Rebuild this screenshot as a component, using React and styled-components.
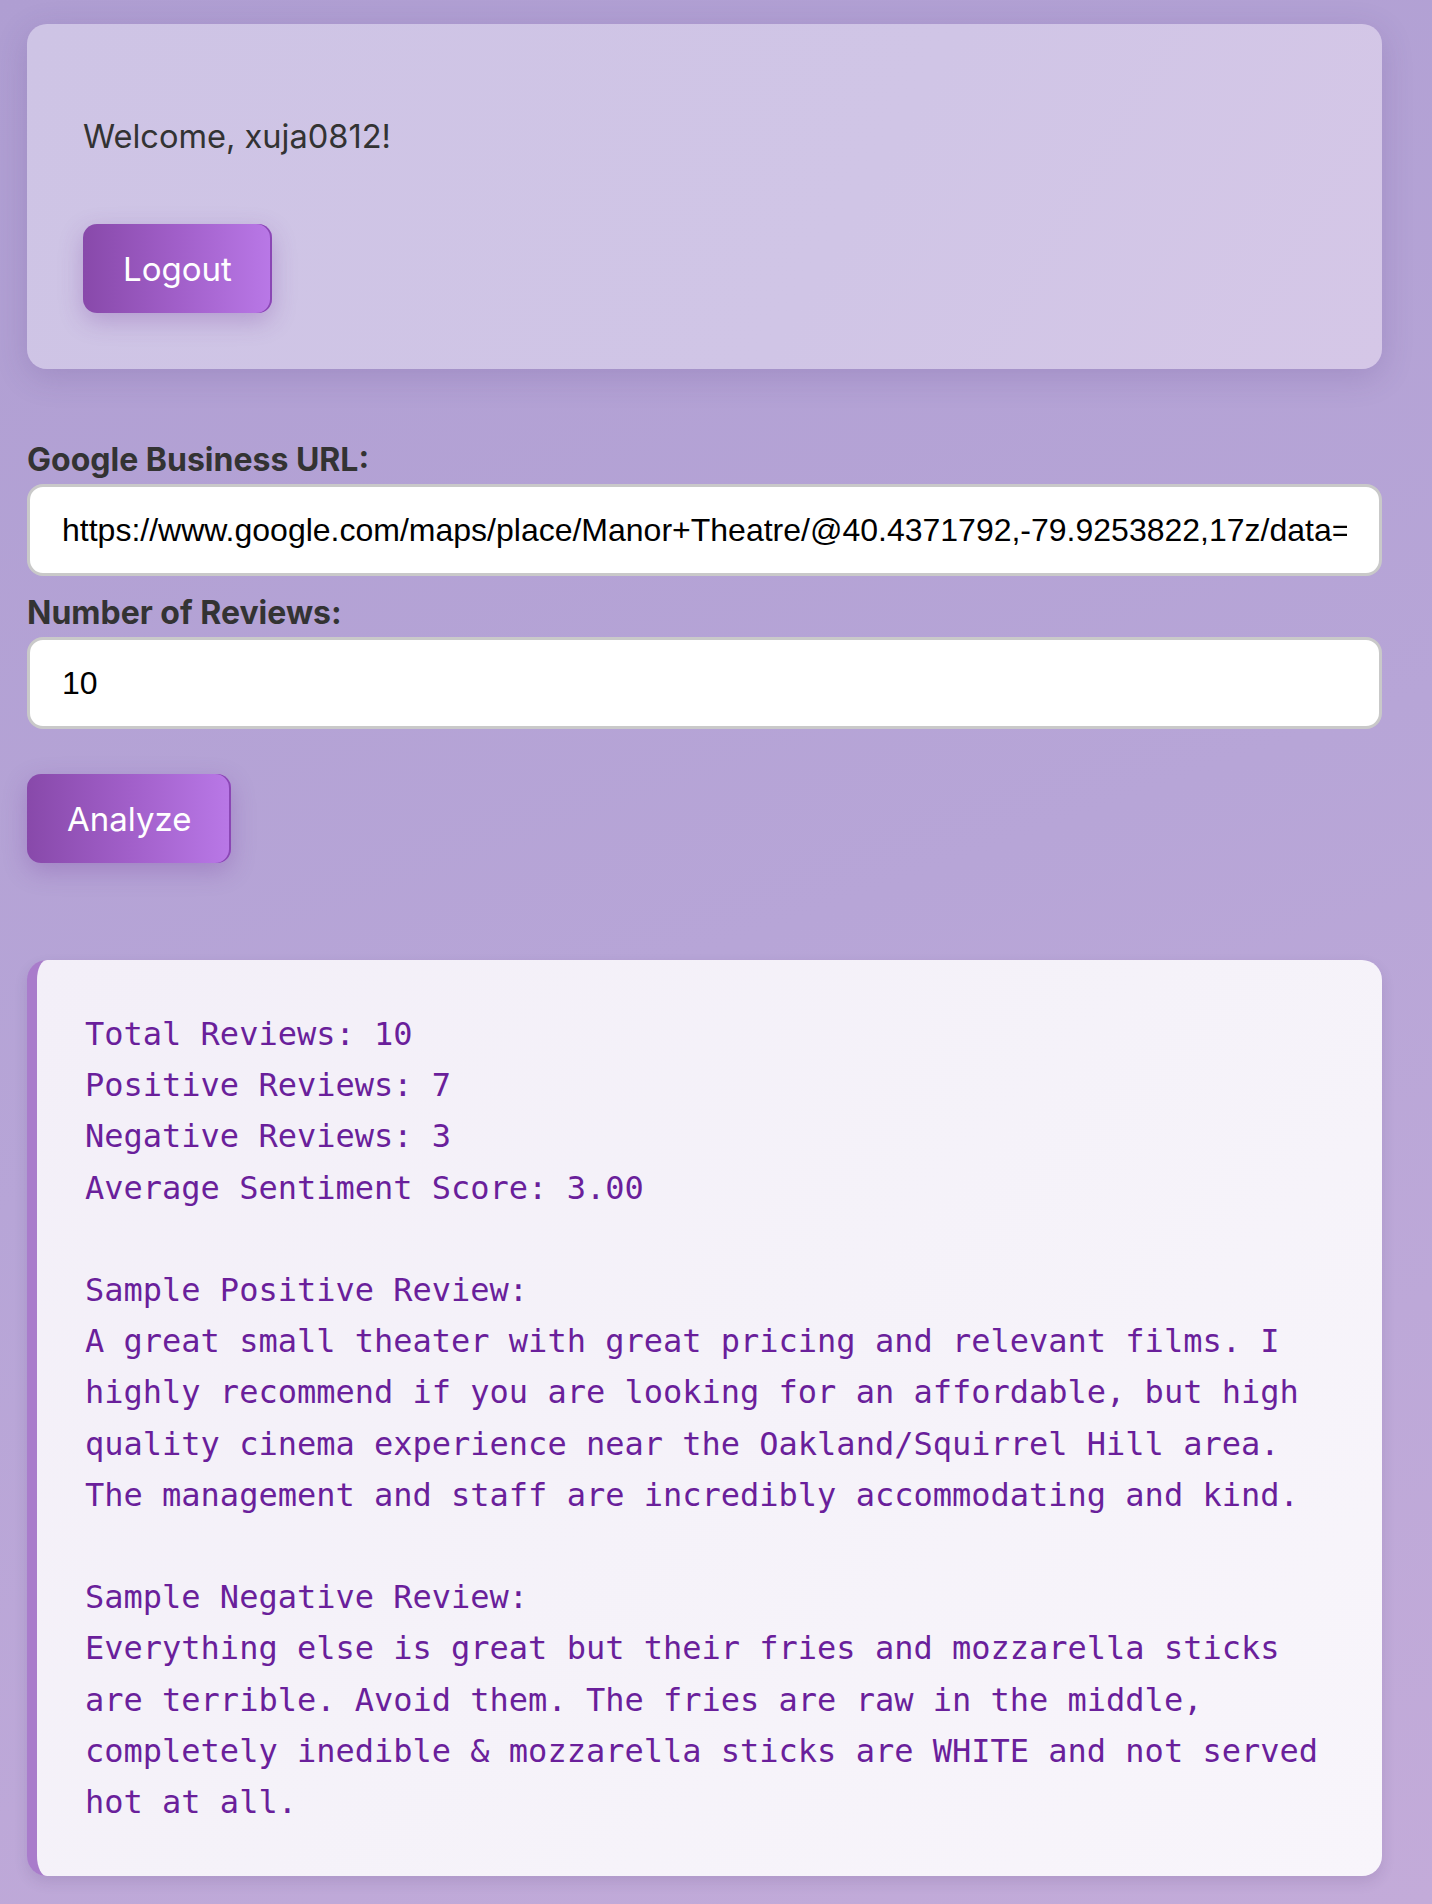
import React from "react";
import styled, { createGlobalStyle } from "styled-components";

const GlobalStyle = createGlobalStyle`
  html, body {
    margin: 0;
    padding: 0;
  }
  body {
    min-height: 100vh;
    background: linear-gradient(160deg, #af9ed2 0%, #b7a5d7 50%, #c3abd9 100%);
    font-family: "Inter", "Noto Sans", sans-serif;
    color: #333;
  }
  * { box-sizing: border-box; }
`;

const Page = styled.div`
  padding: 24px 50px 27px 27px;
  display: flex;
  flex-direction: column;
`;

const UserCard = styled.section`
  background: linear-gradient(120deg, #cec4e5 0%, #d0c5e6 60%, #d5c7e7 100%);
  border-radius: 20px;
  padding: 0 56px 56px;
  height: 345px;
  box-shadow: 0 8px 32px rgba(80, 50, 120, 0.18);
  display: flex;
  flex-direction: column;
  align-items: flex-start;
`;

const Welcome = styled.p`
  margin: 91px 0 0;
  font-size: 32.6px;
  line-height: 42px;
  font-weight: 400;
  color: #333;
`;

const GradientButton = styled.button`
  height: 89px;
  padding: 0 40px;
  margin-top: ${(p) => p.$mt || 0}px;
  border: none;
  border-radius: 14px;
  background: linear-gradient(90deg, #8849aa 0%, #a15fc9 50%, #b978e7 100%);
  box-shadow: inset -2px 0 0 #8a47b4, 0 8px 24px rgba(110, 50, 150, 0.28);
  color: #fff;
  font-family: "Inter", "Noto Sans", sans-serif;
  font-size: 33px;
  font-weight: 400;
  cursor: pointer;
`;

const Form = styled.div`
  margin-top: 74px;
  display: flex;
  flex-direction: column;
  align-items: stretch;
`;

const Label = styled.label`
  display: block;
  font-size: 32px;
  line-height: 36px;
  font-weight: 700;
  color: #333;
  margin-top: -1px;
  margin-bottom: 6px;
`;

const TextInput = styled.input`
  display: block;
  width: 100%;
  height: 92px;
  padding: 0 32px;
  margin-bottom: 20px;
  border: 3px solid #c9c9c9;
  border-radius: 16px;
  background: #fff;
  font-family: "Liberation Sans", Arial, sans-serif;
  font-size: 32px;
  color: #000;
  outline: none;
`;

const Actions = styled.div`
  margin-top: 25px;
  display: flex;
`;

const ResultCard = styled.section`
  margin-top: 97px;
  background: linear-gradient(135deg, #f3eff8 0%, #f5f2f9 50%, #f8f5fb 100%);
  border-left: 10px solid #a97ccb;
  border-radius: 20px;
  padding: 49px 48px 48px;
  box-shadow: 0 6px 14px rgba(60, 30, 90, 0.12);
`;

const ResultText = styled.pre`
  margin: 0;
  font-family: "DejaVu Sans Mono", "Liberation Mono", monospace;
  font-size: 32px;
  line-height: 51.2px;
  color: #6a1f9b;
  white-space: pre-wrap;
  word-wrap: break-word;
`;

const URL_VALUE =
  "https://www.google.com/maps/place/Manor+Theatre/@40.4371792,-79.9253822,17z/data=";

const RESULT = `Total Reviews: 10
Positive Reviews: 7
Negative Reviews: 3
Average Sentiment Score: 3.00

Sample Positive Review:
A great small theater with great pricing and relevant films. I highly recommend if you are looking for an affordable, but high quality cinema experience near the Oakland/Squirrel Hill area. The management and staff are incredibly accommodating and kind.

Sample Negative Review:
Everything else is great but their fries and mozzarella sticks are terrible. Avoid them. The fries are raw in the middle, completely inedible & mozzarella sticks are WHITE and not served hot at all.`;

export default function App() {
  return (
    <>
      <GlobalStyle />
      <Page>
        <UserCard>
          <Welcome>Welcome, xuja0812!</Welcome>
          <GradientButton $mt={67}>Logout</GradientButton>
        </UserCard>
        <Form>
          <Label htmlFor="url">Google Business URL:</Label>
          <TextInput id="url" type="text" defaultValue={URL_VALUE} />
          <Label htmlFor="count">Number of Reviews:</Label>
          <TextInput id="count" type="number" defaultValue="10" />
          <Actions>
            <GradientButton>Analyze</GradientButton>
          </Actions>
        </Form>
        <ResultCard>
          <ResultText>{RESULT}</ResultText>
        </ResultCard>
      </Page>
    </>
  );
}
